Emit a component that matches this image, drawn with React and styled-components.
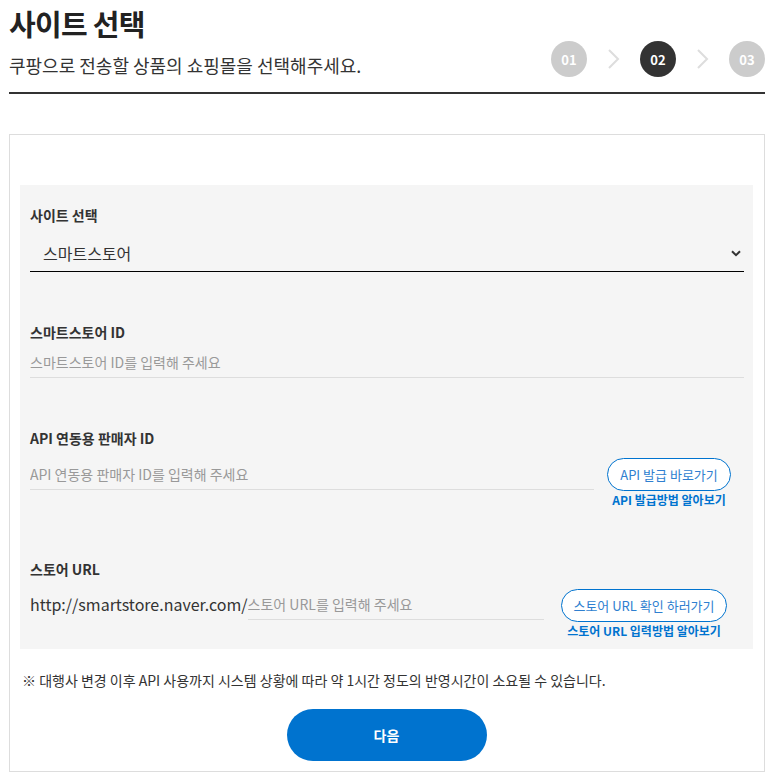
import React from 'react';
import styled, { createGlobalStyle } from 'styled-components';

const steps = ['01', '02', '03'];
const activeStep = '02';

const App = () => (
  <>
    <GlobalStyle />
    <Page>
      <Header>
        <HeaderText>
          <Title>사이트 선택</Title>
          <Subtitle>쿠팡으로 전송할 상품의 쇼핑몰을 선택해주세요.</Subtitle>
        </HeaderText>

        <Steps>
          {steps.map((step, i) => (
            <React.Fragment key={step}>
              {i > 0 && <StepArrow />}
              <StepCircle $active={step === activeStep}>{step}</StepCircle>
            </React.Fragment>
          ))}
        </Steps>
      </Header>

      <Card>
        <Panel>
          <Label>사이트 선택</Label>
          <SelectWrap>
            <Select defaultValue="smartstore">
              <option value="smartstore">스마트스토어</option>
            </Select>
            <SelectArrow />
          </SelectWrap>

          <Label $top={50}>스마트스토어 ID</Label>
          <TextInput $height={36} $padTop={5} placeholder="스마트스토어 ID를 입력해 주세요" />

          <Label $top={50}>API 연동용 판매자 ID</Label>
          <Row $gap={13}>
            <TextInput $height={42} $padTop={10} placeholder="API 연동용 판매자 ID를 입력해 주세요" />
            <Side $width={124} $right={13}>
              <OutlineButton>API 발급 바로가기</OutlineButton>
              <HelpLink href="#">API 발급방법 알아보기</HelpLink>
            </Side>
          </Row>

          <Label $top={52}>스토어 URL</Label>
          <Row $gap={17}>
            <UrlPrefix>http://smartstore.naver.com/</UrlPrefix>
            <TextInput $height={41} $padTop={10} placeholder="스토어 URL를 입력해 주세요" />
            <Side $width={166} $right={17}>
              <OutlineButton>스토어 URL 확인 하러가기</OutlineButton>
              <HelpLink href="#">스토어 URL 입력방법 알아보기</HelpLink>
            </Side>
          </Row>
        </Panel>

        <Notice>
          ※ 대행사 변경 이후 API 사용까지 시스템 상황에 따라 약 1시간 정도의 반영시간이 소요될 수 있습니다.
        </Notice>

        <NextButton>다음</NextButton>
      </Card>
    </Page>
  </>
);

export default App;

const StepArrow = () => (
  <ArrowIcon width="13" height="22" viewBox="0 0 13 22">
    <path d="M2 2l9 9-9 9" fill="none" stroke="#ddd" strokeWidth="2" />
  </ArrowIcon>
);

const SelectArrow = () => (
  <ChevronIcon width="10" height="7" viewBox="0 0 10 7">
    <path d="M1 1.2l4 4 4-4" fill="none" stroke="#333" strokeWidth="2" />
  </ChevronIcon>
);

const GlobalStyle = createGlobalStyle`
  body {
    margin: 0;
    background: #fff;
    font-family: "Noto Sans CJK KR", "Noto Sans", sans-serif;
    color: #333;
  }
  * {
    box-sizing: border-box;
  }
`;

const Page = styled.div`
  width: 774px;
  padding: 0 9px;
`;

const Header = styled.div`
  display: flex;
  justify-content: space-between;
  align-items: flex-end;
  padding-bottom: 14px;
  border-bottom: 2px solid #333;
`;

const HeaderText = styled.div`
  display: flex;
  flex-direction: column;
`;

const Title = styled.h1`
  margin: 0;
  padding-top: 3px;
  font-size: 29px;
  line-height: 40px;
  font-weight: 700;
  color: #222;
  letter-spacing: -0.7px;
`;

const Subtitle = styled.p`
  margin: 9px 0 0;
  font-size: 18px;
  line-height: 26px;
  color: #333;
`;

const Steps = styled.div`
  display: flex;
  align-items: center;
  gap: 20px;
  margin-bottom: 1px;
`;

const StepCircle = styled.div`
  width: 36px;
  height: 36px;
  border-radius: 50%;
  display: flex;
  align-items: center;
  justify-content: center;
  background: ${({ $active }) => ($active ? '#333' : '#ccc')};
  color: #fff;
  font-size: 13px;
  font-weight: 700;
`;

const ArrowIcon = styled.svg`
  display: block;
`;

const Card = styled.div`
  margin-top: 40px;
  border: 1px solid #ddd;
  padding: 50px 11px 10px 10px;
  display: flex;
  flex-direction: column;
`;

const Panel = styled.div`
  background: #f5f5f5;
  padding: 20px 9px 11px 10px;
  display: flex;
  flex-direction: column;
`;

const Label = styled.div`
  margin-top: ${({ $top }) => $top || 0}px;
  font-size: 14px;
  line-height: 20px;
  font-weight: 700;
  color: #333;
`;

const SelectWrap = styled.div`
  position: relative;
`;

const Select = styled.select`
  display: block;
  width: 100%;
  height: 47px;
  padding: 10px 13px 0;
  border: none;
  border-bottom: 1px solid #000;
  border-radius: 0;
  background: transparent;
  appearance: none;
  font-family: inherit;
  font-size: 16px;
  color: #333;
  outline: none;
`;

const ChevronIcon = styled.svg`
  position: absolute;
  right: 3px;
  top: 25px;
  pointer-events: none;
`;

const TextInput = styled.input`
  display: block;
  flex: 1 1 auto;
  min-width: 0;
  width: 100%;
  height: ${({ $height }) => $height}px;
  padding: ${({ $padTop }) => $padTop}px 0 0;
  border: none;
  border-bottom: 1px solid #ddd;
  border-radius: 0;
  background: transparent;
  font-family: inherit;
  font-size: 14px;
  color: #333;
  outline: none;

  &::placeholder {
    color: #999;
  }
`;

const Row = styled.div`
  display: flex;
  align-items: flex-start;
  gap: ${({ $gap }) => $gap}px;
`;

const UrlPrefix = styled.span`
  flex: none;
  margin: 10px -17px 0 0;
  font-size: 16px;
  line-height: 30px;
  color: #333;
  white-space: nowrap;
`;

const Side = styled.div`
  flex: none;
  width: ${({ $width }) => $width}px;
  margin-right: ${({ $right }) => $right}px;
  display: flex;
  flex-direction: column;
  align-items: center;
  padding-top: 10px;
`;

const OutlineButton = styled.button`
  width: 100%;
  height: 33px;
  border: 1px solid #0073cf;
  border-radius: 17px;
  background: #fff;
  color: #2f7fd0;
  font-family: inherit;
  font-size: 13px;
  cursor: pointer;
`;

const HelpLink = styled.a`
  margin-top: 2px;
  font-size: 12px;
  line-height: 14px;
  font-weight: 700;
  color: #0073cf;
  text-decoration: none;
  white-space: nowrap;
`;

const Notice = styled.p`
  margin: 21px 0 0;
  padding-left: 2px;
  font-size: 14px;
  line-height: 20px;
  color: #333;
`;

const NextButton = styled.button`
  align-self: center;
  margin-top: 19px;
  width: 200px;
  height: 52px;
  border: none;
  border-radius: 26px;
  background: #0073cf;
  color: #fff;
  font-family: inherit;
  font-size: 14px;
  font-weight: 700;
  cursor: pointer;
`;
